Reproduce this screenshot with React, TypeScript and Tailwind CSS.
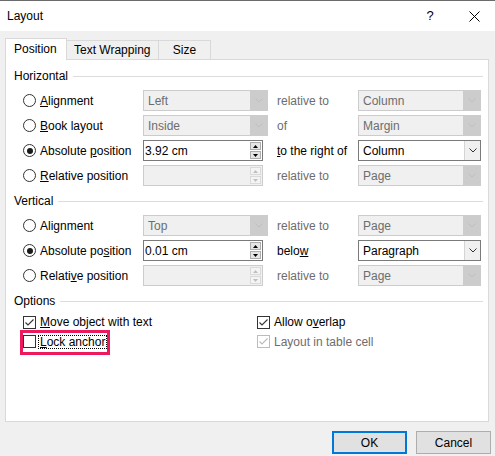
import React from "react"

const gray = "text-[#6d6d6d]"

function Radio({ checked }: { checked?: boolean }) {
  return (
    <span className="flex h-[13px] w-[13px] shrink-0 items-center justify-center rounded-full border border-[#333333] bg-white">
      {checked && <span className="h-[6px] w-[6px] rounded-full bg-[#1a1a1a]" />}
    </span>
  )
}

function Check({ checked, disabled }: { checked?: boolean; disabled?: boolean }) {
  return (
    <span
      className={`flex h-[13px] w-[13px] shrink-0 items-center justify-center border bg-white ${
        disabled ? "border-[#bcbcbc]" : "border-[#333333]"
      }`}
    >
      {checked && (
        <svg width="11" height="11" viewBox="0 0 11 11">
          <path
            d="M1.5 5.5 L4 8 L9.5 2.5"
            fill="none"
            stroke={disabled ? "#bcbcbc" : "#333333"}
            strokeWidth="1.1"
          />
        </svg>
      )}
    </span>
  )
}

function Chevron({ color }: { color: string }) {
  return (
    <svg width="8" height="5" viewBox="0 0 8 5">
      <path d="M0.5 0.5 L4 4 L7.5 0.5" fill="none" stroke={color} strokeWidth="1" />
    </svg>
  )
}

function Combo({ value, enabled, w }: { value: string; enabled?: boolean; w: string }) {
  if (enabled) {
    return (
      <div className={`flex h-[21px] ${w} items-stretch border border-[#7a7a7a] bg-white`}>
        <span className="flex flex-1 items-center pl-[4px] text-black">{value}</span>
        <span className="flex w-[16px] items-center justify-center border-l border-[#d4d4d4] bg-[#f0f0f0]">
          <Chevron color="#333333" />
        </span>
      </div>
    )
  }
  return (
    <div className={`flex h-[21px] ${w} items-stretch border border-[#cccccc] bg-[#f0f0f0]`}>
      <span className={`flex flex-1 items-center pl-[4px] ${gray}`}>{value}</span>
      <span className="flex w-[17px] items-center justify-center bg-[#cccccc]">
        <Chevron color="#bfbfbf" />
      </span>
    </div>
  )
}

function Spin({ value, enabled }: { value?: string; enabled?: boolean }) {
  const btn = enabled
    ? "border-[#adadad] bg-[#e5e5e5]"
    : "border-[#dadada] bg-[#f4f4f4]"
  const tri = enabled ? "#000000" : "#bfbfbf"
  return (
    <div className="flex w-[125px]">
      <div
        className={`flex h-[21px] w-[120px] items-stretch border ${
          enabled ? "border-[#7a7a7a] bg-white" : "border-[#cccccc] bg-[#f0f0f0]"
        }`}
      >
        <span className="flex flex-1 items-center pl-[1px] text-black">{value}</span>
        <span className="flex w-[12px] flex-col justify-center gap-px py-px pr-px">
          <span className={`flex h-[8px] items-center justify-center border ${btn}`}>
            <svg width="5" height="3" viewBox="0 0 5 3">
              <path d="M0 3 L2.5 0 L5 3 Z" fill={tri} />
            </svg>
          </span>
          <span className={`flex h-[8px] items-center justify-center border ${btn}`}>
            <svg width="5" height="3" viewBox="0 0 5 3">
              <path d="M0 0 L2.5 3 L5 0 Z" fill={tri} />
            </svg>
          </span>
        </span>
      </div>
    </div>
  )
}

function Header({ title }: { title: string }) {
  return (
    <div className="flex h-[16px] items-center gap-[5px] pl-[8px] pr-[5px]">
      <span className="text-black">{title}</span>
      <span className="h-px flex-1 bg-[#dcdcdc]" />
    </div>
  )
}

function Row({
  radio,
  checked,
  control,
  mid,
  midEnabled,
  right,
}: {
  radio: React.ReactNode
  checked?: boolean
  control: React.ReactNode
  mid: React.ReactNode
  midEnabled?: boolean
  right: React.ReactNode
}) {
  return (
    <div className="flex h-[21px] items-center pl-[17px]">
      <div className="flex w-[120px] items-center gap-[4px]">
        <Radio checked={checked} />
        <span className="text-black">{radio}</span>
      </div>
      {control}
      <span className={`w-[90px] pl-[9px] ${midEnabled ? "text-black" : gray}`}>{mid}</span>
      {right}
    </div>
  )
}

export default function App() {
  return (
    <div className="h-[456px] w-[495px] overflow-hidden bg-[#f0f0f0] font-['Liberation_Sans',Arial,sans-serif] text-[12px] leading-normal">
      {/* title bar */}
      <div className="flex h-[31px] items-center border-t border-[#6b6b6b] bg-white">
        <span className="pl-[7px] text-black">Layout</span>
        <span className="flex-1" />
        <span className="w-[46px] text-center text-[13px] text-black">?</span>
        <span className="flex w-[42px] items-center justify-center">
          <svg width="11" height="11" viewBox="0 0 11 11">
            <path d="M0.5 0.5 L10.5 10.5 M10.5 0.5 L0.5 10.5" stroke="#000" strokeWidth="1" />
          </svg>
        </span>
      </div>

      {/* tabs */}
      <div className="relative z-10 mt-[7px] flex h-[22px] items-end pl-[5px]">
        <div className="flex h-[22px] w-[62px] items-center border border-b-0 border-[#d9d9d9] bg-white pb-px pl-[8px] text-black">
          Position
        </div>
        <div className="mb-px flex h-[19px] w-[92px] items-center border border-b-0 border-l-0 border-[#d9d9d9] pl-[7px] text-black">
          Text Wrapping
        </div>
        <div className="mb-px flex h-[19px] w-[52px] items-center justify-center border border-b-0 border-l-0 border-[#d9d9d9] text-black">
          Size
        </div>
      </div>

      {/* panel */}
      <div className="-mt-px ml-[5px] h-[363px] w-[484px] border border-[#d9d9d9] bg-white">
        <div className="mt-[8px]">
          <Header title="Horizontal" />
        </div>
        <div className="mt-[6px] flex flex-col gap-[4px]">
          <Row
            radio={<><u>A</u>lignment</>}
            control={<Combo value="Left" w="w-[125px]" />}
            mid="relative to"
            right={<Combo value="Column" w="w-[123px]" />}
          />
          <Row
            radio={<><u>B</u>ook layout</>}
            control={<Combo value="Inside" w="w-[125px]" />}
            mid="of"
            right={<Combo value="Margin" w="w-[123px]" />}
          />
          <Row
            radio={<>Absolute <u>p</u>osition</>}
            checked
            control={<Spin value="3.92 cm" enabled />}
            mid={<><u>t</u>o the right of</>}
            midEnabled
            right={<Combo value="Column" w="w-[123px]" enabled />}
          />
          <Row
            radio={<><u>R</u>elative position</>}
            control={<Spin />}
            mid="relative to"
            right={<Combo value="Page" w="w-[123px]" />}
          />
        </div>

        <div className="mt-[7px]">
          <Header title="Vertical" />
        </div>
        <div className="mt-[6px] flex flex-col gap-[4px]">
          <Row
            radio={<>Ali<u>g</u>nment</>}
            control={<Combo value="Top" w="w-[125px]" />}
            mid="relative to"
            right={<Combo value="Page" w="w-[123px]" />}
          />
          <Row
            radio={<>Absolute po<u>s</u>ition</>}
            checked
            control={<Spin value="0.01 cm" enabled />}
            mid={<>belo<u>w</u></>}
            midEnabled
            right={<Combo value="Paragraph" w="w-[123px]" enabled />}
          />
          <Row
            radio={<>Relati<u>v</u>e position</>}
            control={<Spin />}
            mid="relative to"
            right={<Combo value="Page" w="w-[123px]" />}
          />
        </div>

        <div className="mt-[7px]">
          <Header title="Options" />
        </div>
        <div className="mt-[3px] flex h-[20px] items-center pl-[17px]">
          <div className="flex w-[234px] items-center gap-[4px]">
            <Check checked />
            <span className="text-black">
              <u>M</u>ove object with text
            </span>
          </div>
          <div className="flex items-center gap-[4px]">
            <Check checked />
            <span className="text-black">
              Allow o<u>v</u>erlap
            </span>
          </div>
        </div>
        <div className="flex h-[19px] items-center pl-[17px]">
          <div className="flex w-[234px] items-center">
            <div className="relative flex items-center">
              <Check />
              <span className="ml-[2px] flex h-[14px] items-center border border-dotted border-black pr-px pl-px text-black">
                <u>L</u>ock anchor
              </span>
              <span className="pointer-events-none absolute left-[-3px] top-[-5px] h-[25px] w-[90px] border-[3px] border-[#ec1a5c]" />
            </div>
          </div>
          <div className="flex items-center gap-[4px]">
            <Check checked disabled />
            <span className={gray}>Layout in table cell</span>
          </div>
        </div>
      </div>

      {/* buttons */}
      <div className="mt-[9px] flex justify-end gap-[9px] pr-[4px]">
        <button className="flex h-[23px] w-[75px] items-center justify-center border-2 border-[#0078d7] bg-[#e1e1e1] text-black">
          OK
        </button>
        <button className="flex h-[23px] w-[75px] items-center justify-center border border-[#adadad] bg-[#e1e1e1] text-black">
          Cancel
        </button>
      </div>
    </div>
  )
}
